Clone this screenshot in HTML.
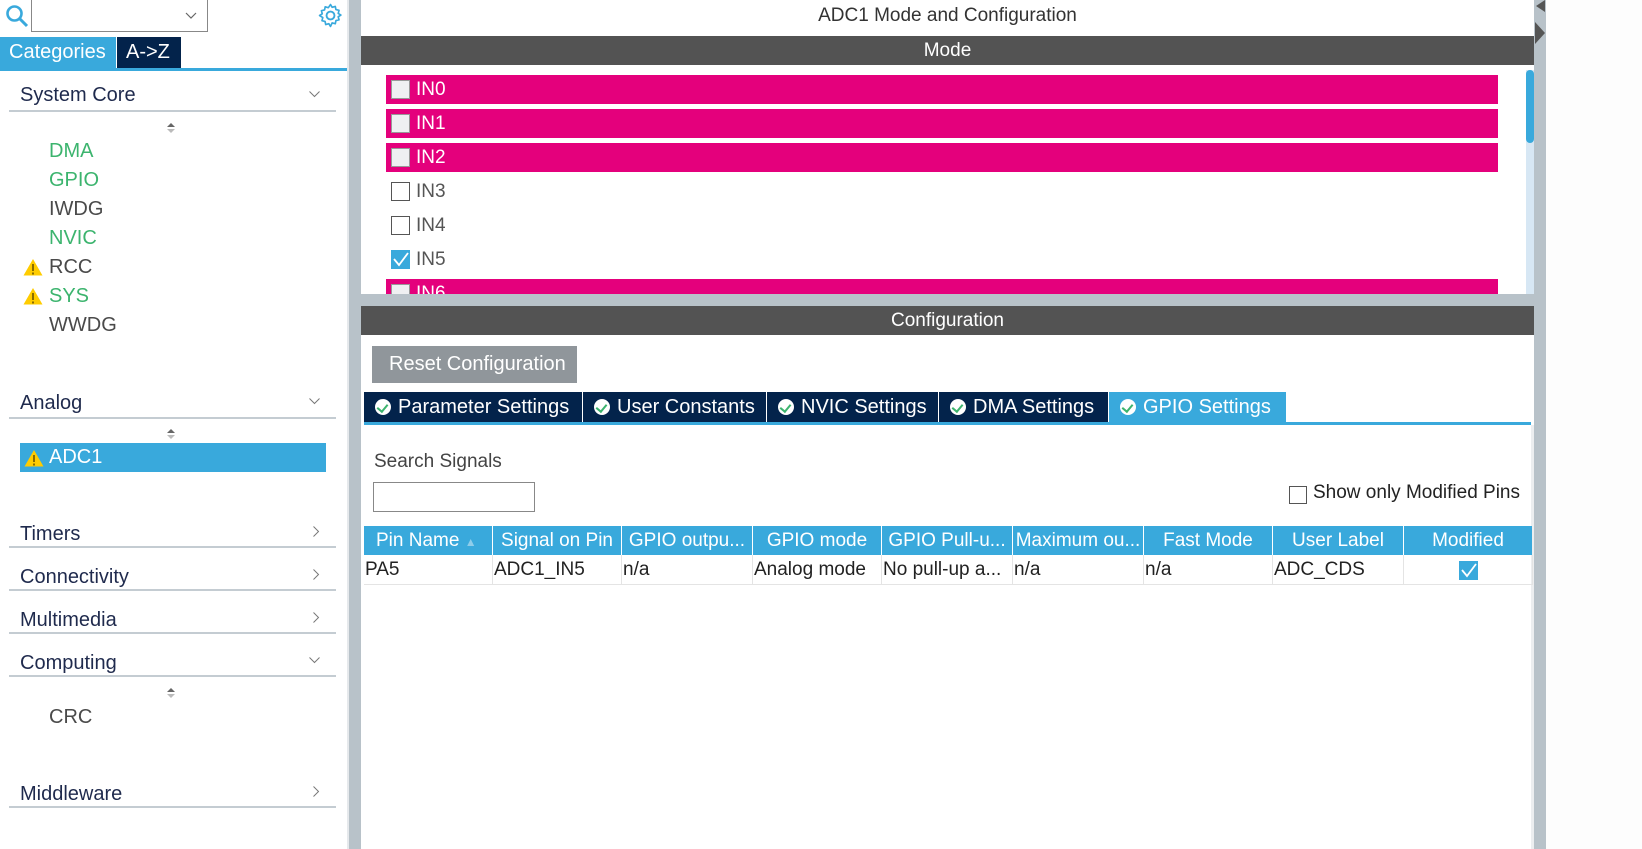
<!DOCTYPE html>
<html><head><meta charset="utf-8"><style>
*{margin:0;padding:0;box-sizing:border-box}
body{width:1642px;height:849px;position:relative;overflow:hidden;background:#fff;font-family:"Liberation Sans",Arial,sans-serif;}
.a{position:absolute}
.cat{position:absolute;left:20px;font-size:20px;color:#1f2a4d}
.ln{position:absolute;left:9px;width:327px;height:2px;background:#c4ccd2}
.it{position:absolute;left:49px;font-size:20px}
.g{color:#3cb46e}.k{color:#4a4a4a}
.sort{position:absolute;left:167px;width:8px;height:10px}
.pink{position:absolute;left:386px;width:1112px;height:29px;background:#e4007c}
.cb{position:absolute;left:391px;width:19px;height:19px;border:1px solid #555;background:#fff}
.pink .cb{left:5px;top:5px;background:#eff0f2;border:1px solid #999}
.inl{position:absolute;left:416px;font-size:19px;color:#555}
.pink .inl{left:30px;top:4px;color:#fff}
.tab{position:absolute;top:392px;height:31px;background:#03234b;color:#fff;font-size:20px;line-height:31px;padding-left:11px;white-space:nowrap;font-family:"Liberation Sans Narrow","Liberation Sans",sans-serif}
.ok{display:inline-block;width:16px;height:16px;border-radius:50%;background:#fff;vertical-align:-2px;margin-right:7px;position:relative}
.ok:after{content:"";position:absolute;left:4px;top:3px;width:5px;height:8px;border:solid #3cb46e;border-width:0 2.5px 2.5px 0;transform:rotate(40deg)}
.th{position:absolute;top:526px;height:29px;background:#39a9dc;color:#fff;font-size:19px;line-height:29px;text-align:center;white-space:nowrap;overflow:hidden;font-family:"Liberation Sans Narrow","Liberation Sans",sans-serif}
.td{position:absolute;top:555px;height:30px;border-right:1px solid #e4e4e4;border-bottom:1px solid #e4e4e4;color:#222;font-size:19px;line-height:30px;padding-left:1px;white-space:nowrap;overflow:hidden;font-family:"Liberation Sans Narrow","Liberation Sans",sans-serif}
</style></head><body>
<svg class="a" style="left:5px;top:4px" width="24" height="24" viewBox="0 0 24 24"><circle cx="9.5" cy="9.5" r="7" fill="none" stroke="#39a9dc" stroke-width="2.6"/><line x1="14.5" y1="14.5" x2="22" y2="22" stroke="#39a9dc" stroke-width="3"/></svg>
<div class="a" style="left:31px;top:0;width:177px;height:32px;border:1px solid #888;border-top:none"></div>
<svg class="a" style="left:185px;top:12px" width="12" height="8"><polyline points="1,1 6,6 11,1" fill="none" stroke="#666" stroke-width="1.2"/></svg>
<svg class="a" style="left:318px;top:3px" width="25" height="25" viewBox="0 0 24 24"><path d="M12 1.5l1.6 2.6 3-.8.6 3 3 .7-.8 3 2.6 1.6-2.6 1.6.8 3-3 .7-.6 3-3-.8L12 22.5l-1.6-2.6-3 .8-.6-3-3-.7.8-3L1.5 12l2.6-1.6-.8-3 3-.7.6-3 3 .8z" fill="none" stroke="#39a9dc" stroke-width="1.6" stroke-linejoin="round"/><circle cx="12" cy="12" r="3.8" fill="none" stroke="#39a9dc" stroke-width="1.8"/></svg>
<div class="a" style="left:0;top:37px;width:116px;height:31px;background:#39a9dc;color:#fff;font-size:20px;line-height:31px;padding-left:9px">Categories</div>
<div class="a" style="left:117px;top:37px;width:64px;height:31px;background:#03234b;color:#fff;font-size:20px;line-height:31px;padding-left:9px">A-&gt;Z</div>
<div class="a" style="left:0;top:68px;width:349px;height:3px;background:#39a9dc"></div>

<div class="cat" style="top:84px">System Core</div><div class="ln" style="top:110px"></div>
<svg class="a" style="left:309px;top:91px" width="11" height="7"><polyline points="0.5,0.5 5.5,5.5 10.5,0.5" fill="none" stroke="#777" stroke-width="1"/></svg>
<svg class="sort" style="top:123px"><polygon points="4,0 8,4 0,4" fill="#666"/><polygon points="4,10 8,6 0,6" fill="#bbb"/></svg>
<div class="it g" style="top:140px">DMA</div>
<div class="it g" style="top:169px">GPIO</div>
<div class="it k" style="top:198px">IWDG</div>
<div class="it g" style="top:227px">NVIC</div>
<svg class="a" style="left:23px;top:258px" width="20" height="18"><polygon points="10,1 19.5,17.5 0.5,17.5" fill="#ffcc00"/><rect x="9" y="6" width="2" height="7" fill="#8a6d00"/><rect x="9" y="14.5" width="2" height="2" fill="#8a6d00"/></svg>
<div class="it k" style="top:256px">RCC</div>
<svg class="a" style="left:23px;top:287px" width="20" height="18"><polygon points="10,1 19.5,17.5 0.5,17.5" fill="#ffcc00"/><rect x="9" y="6" width="2" height="7" fill="#8a6d00"/><rect x="9" y="14.5" width="2" height="2" fill="#8a6d00"/></svg>
<div class="it g" style="top:285px">SYS</div>
<div class="it k" style="top:314px">WWDG</div>

<div class="cat" style="top:392px">Analog</div><div class="ln" style="top:417px"></div>
<svg class="a" style="left:309px;top:398px" width="11" height="7"><polyline points="0.5,0.5 5.5,5.5 10.5,0.5" fill="none" stroke="#777" stroke-width="1"/></svg>
<svg class="sort" style="top:429px"><polygon points="4,0 8,4 0,4" fill="#666"/><polygon points="4,10 8,6 0,6" fill="#bbb"/></svg>
<div class="a" style="left:20px;top:443px;width:306px;height:29px;background:#39a9dc"></div>
<svg class="a" style="left:24px;top:449px" width="20" height="18"><polygon points="10,1 19.5,17.5 0.5,17.5" fill="#ffcc00"/><rect x="9" y="6" width="2" height="7" fill="#8a6d00"/><rect x="9" y="14.5" width="2" height="2" fill="#8a6d00"/></svg>
<div class="it" style="top:446px;color:#fff">ADC1</div>

<div class="cat" style="top:523px">Timers</div><div class="ln" style="top:546px"></div>
<svg class="a" style="left:313px;top:526px" width="7" height="11"><polyline points="0.5,0.5 5.5,5.5 0.5,10.5" fill="none" stroke="#777" stroke-width="1"/></svg>
<div class="cat" style="top:566px">Connectivity</div><div class="ln" style="top:589px"></div>
<svg class="a" style="left:313px;top:569px" width="7" height="11"><polyline points="0.5,0.5 5.5,5.5 0.5,10.5" fill="none" stroke="#777" stroke-width="1"/></svg>
<div class="cat" style="top:609px">Multimedia</div><div class="ln" style="top:632px"></div>
<svg class="a" style="left:313px;top:612px" width="7" height="11"><polyline points="0.5,0.5 5.5,5.5 0.5,10.5" fill="none" stroke="#777" stroke-width="1"/></svg>
<div class="cat" style="top:652px">Computing</div><div class="ln" style="top:675px"></div>
<svg class="a" style="left:309px;top:657px" width="11" height="7"><polyline points="0.5,0.5 5.5,5.5 10.5,0.5" fill="none" stroke="#777" stroke-width="1"/></svg>
<svg class="sort" style="top:688px"><polygon points="4,0 8,4 0,4" fill="#666"/><polygon points="4,10 8,6 0,6" fill="#bbb"/></svg>
<div class="it k" style="top:706px">CRC</div>
<div class="cat" style="top:783px">Middleware</div><div class="ln" style="top:806px"></div>
<svg class="a" style="left:313px;top:786px" width="7" height="11"><polyline points="0.5,0.5 5.5,5.5 0.5,10.5" fill="none" stroke="#777" stroke-width="1"/></svg>

<div class="a" style="left:347px;top:0;width:2px;height:849px;background:#e6e9ec"></div>
<div class="a" style="left:349px;top:0;width:12px;height:849px;background:#b8c2c9"></div>
<div class="a" style="left:1534px;top:0;width:12px;height:849px;background:#b8c2c9"></div>
<svg class="a" style="left:1535px;top:0" width="10" height="44"><polygon points="10,0 10,12 1,6" fill="#555"/><polygon points="0,22 0,44 10,33" fill="#555"/></svg>
<div class="a" style="left:1546px;top:0;width:96px;height:849px;background:#fdfdfd"></div>
<div class="a" style="left:361px;top:294px;width:1173px;height:12px;background:#b8c2c9"></div>

<div class="a" style="left:361px;top:5px;width:1173px;text-align:center;font-size:19px;color:#333">ADC1 Mode and Configuration</div>
<div class="a" style="left:361px;top:36px;width:1173px;height:29px;background:#535353;color:#fff;text-align:center;font-size:19px;line-height:29px">Mode</div>
<div class="pink" style="top:75px"><div class="cb"></div><div class="inl">IN0</div></div>
<div class="pink" style="top:109px"><div class="cb"></div><div class="inl">IN1</div></div>
<div class="pink" style="top:143px"><div class="cb"></div><div class="inl">IN2</div></div>
<div class="cb" style="top:182px"></div><div class="inl" style="top:181px">IN3</div>
<div class="cb" style="top:216px"></div><div class="inl" style="top:215px">IN4</div>
<div class="a" style="left:391px;top:250px;width:19px;height:19px;background:#39a9dc"></div>
<svg class="a" style="left:391px;top:250px" width="19" height="19"><polyline points="3,9 8,15 17,3" fill="none" stroke="#fff" stroke-width="1.8"/></svg>
<div class="inl" style="top:249px">IN5</div>
<div class="pink" style="top:279px;height:15px;overflow:hidden"><div class="cb"></div><div class="inl">IN6</div></div>
<div class="a" style="left:1526px;top:70px;width:8px;height:224px;background:#d7e7f4"></div>
<div class="a" style="left:1526px;top:70px;width:8px;height:73px;background:#39a9dc;border-radius:4px"></div>

<div class="a" style="left:361px;top:306px;width:1173px;height:29px;background:#535353;color:#fff;text-align:center;font-size:19px;line-height:29px">Configuration</div>
<div class="a" style="left:372px;top:346px;width:205px;height:37px;background:#90969b;color:#fff;font-size:20px;line-height:37px;padding-left:17px;font-family:'Liberation Sans Narrow','Liberation Sans',sans-serif">Reset Configuration</div>
<div class="tab" style="left:364px;width:218px"><span class="ok"></span>Parameter Settings</div>
<div class="tab" style="left:583px;width:183px"><span class="ok"></span>User Constants</div>
<div class="tab" style="left:767px;width:171px"><span class="ok"></span>NVIC Settings</div>
<div class="tab" style="left:939px;width:169px"><span class="ok"></span>DMA Settings</div>
<div class="tab" style="left:1109px;width:177px;background:#39a9dc"><span class="ok"></span>GPIO Settings</div>
<div class="a" style="left:364px;top:422px;width:1167px;height:3px;background:#39a9dc"></div>
<div class="a" style="left:1531px;top:425px;width:3px;height:424px;background:#eceef0"></div>
<div class="a" style="left:374px;top:451px;font-size:19px;color:#444;font-family:'Liberation Sans Narrow','Liberation Sans',sans-serif">Search Signals</div>
<div class="a" style="left:373px;top:482px;width:162px;height:30px;border:1px solid #888"></div>
<div class="a" style="left:1289px;top:486px;width:18px;height:18px;border:1px solid #555"></div>
<div class="a" style="left:1313px;top:482px;font-size:19px;color:#222">Show only Modified Pins</div>

<div class="th" style="left:364px;width:128px;text-align:left;padding-left:12px">Pin Name <span style="color:#8fcdea;font-size:12px">▲</span></div>
<div class="th" style="left:493px;width:128px">Signal on Pin</div>
<div class="th" style="left:622px;width:130px">GPIO outpu...</div>
<div class="th" style="left:753px;width:128px">GPIO mode</div>
<div class="th" style="left:882px;width:130px">GPIO Pull-u...</div>
<div class="th" style="left:1013px;width:130px">Maximum ou...</div>
<div class="th" style="left:1144px;width:128px">Fast Mode</div>
<div class="th" style="left:1273px;width:130px">User Label</div>
<div class="th" style="left:1404px;width:128px">Modified</div>
<div class="td" style="left:364px;width:129px">PA5</div>
<div class="td" style="left:493px;width:129px">ADC1_IN5</div>
<div class="td" style="left:622px;width:131px">n/a</div>
<div class="td" style="left:753px;width:129px">Analog mode</div>
<div class="td" style="left:882px;width:131px">No pull-up a...</div>
<div class="td" style="left:1013px;width:131px">n/a</div>
<div class="td" style="left:1144px;width:129px">n/a</div>
<div class="td" style="left:1273px;width:131px">ADC_CDS</div>
<div class="td" style="left:1404px;width:129px"></div>
<div class="a" style="left:1459px;top:561px;width:19px;height:19px;background:#39a9dc"></div>
<svg class="a" style="left:1459px;top:561px" width="19" height="19"><polyline points="3,9 8,15 17,3" fill="none" stroke="#fff" stroke-width="1.8"/></svg>
</body></html>
